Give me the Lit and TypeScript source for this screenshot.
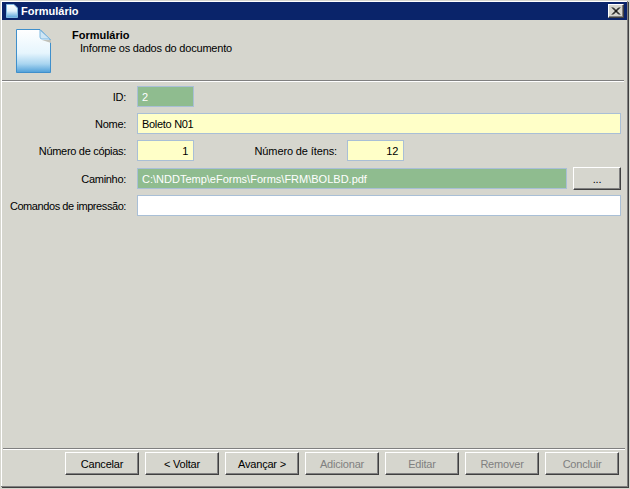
import { LitElement, html, css } from "lit";
import { customElement } from "lit/decorators.js";

@customElement("app-root")
export class AppRoot extends LitElement {
  static styles = css`
    :host { display: block; width: 630px; height: 489px; overflow: hidden; background: #d6d6ce; }
    * { box-sizing: border-box; }
    .window {
      width: 627px; height: 486px; display: flex; flex-direction: column;
      background: #d6d6ce; font: 11px "Liberation Sans", Arial, sans-serif; color: #000;
      border-top: 1px solid #d6d6ce; border-left: 1px solid #d6d6ce;
      padding: 1px 0 0 1px; box-shadow: inset 1px 1px 0 #fff, 1px 1px 0 #808080, 2px 2px 0 #404040;
    }
    .title {
      height: 18px; background: #0a246a; color: #fff; display: flex; align-items: center;
      font-weight: 700; font-size: 11px; padding: 0 3px 0 4px; gap: 3px;
      flex: none;
    }
    .title .name { flex: 1; }
    .close {
      width: 16px; height: 14px; background: #d6d6ce; display: flex; align-items: center; justify-content: center;
      border-top: 1px solid #fff; border-left: 1px solid #fff;
      border-right: 1px solid #404040; border-bottom: 1px solid #404040;
      box-shadow: inset -1px -1px 0 #808080;
    }
    .header { height: 60px; flex: none; display: flex; padding: 9px 0 0 14px; }
    .header .txt { margin-left: 21px; line-height: 13px; }
    .header b { display: block; font-size: 11px; }
    .header span { display: block; padding-left: 8px; letter-spacing: -0.2px; }
    .sep { height: 2px; flex: none; border-top: 1px solid #808080; border-bottom: 1px solid #fff; margin-right: 3px; }
    .form { flex: 1; display: flex; flex-direction: column; gap: 6px; padding: 4px 6px 0 0; }
    .row { display: grid; grid-template-columns: 124px 1fr; column-gap: 11px; align-items: center; height: 21px; flex: none; }
    .row.last { margin-top: 1px; }
    .lbl { text-align: right; white-space: nowrap; letter-spacing: -0.3px; }
    .lbl.narrow { letter-spacing: -0.42px; }
    .in {
      height: 21px; border: 1px solid #a9bfd6; display: flex; align-items: center; padding: 0 5px 0 4px; white-space: nowrap;
      overflow: hidden;
    }
    .green { background: #8fbc8f; color: #fff; }
    .yellow { background: #ffffc8; letter-spacing: -0.3px; }
    .white { background: #fff; }
    .num { justify-content: flex-end; }
    .w57 { width: 57px; flex: none; }
    .split { display: flex; align-items: center; }
    .split .lbl2 { width: 153px; padding-right: 10px; letter-spacing: -0.12px; }
    .path { display: flex; gap: 6px; align-items: center; }
    .path .in { flex: 1; }
    .btn {
      width: 74px; height: 23px; background: #d6d6ce; display: flex; align-items: center; justify-content: center;
      border-top: 1px solid #fff; border-left: 1px solid #fff;
      border-right: 1px solid #404040; border-bottom: 1px solid #404040;
      box-shadow: inset -1px -1px 0 #808080; flex: none; font: inherit; color: #000; padding: 0;
      letter-spacing: -0.2px;
    }
    .btn.dots { width: 48px; }
    .btn.off { color: #808080; }
    .foot { flex: none; }
    .foot .sep { margin: 0 2px 0 1px; }
    .bar { display: flex; justify-content: flex-end; gap: 6px; padding: 2px 8px 11px 0; }
  `;

  render() {
    return html`
      <div class="window">
        <div class="title">
          <svg width="12" height="14" viewBox="0 0 12 14">
            <defs><linearGradient id="t" x1="0" y1="0" x2="0" y2="1"><stop offset="0" stop-color="#fff"/><stop offset=".5" stop-color="#dff1fb"/><stop offset="1" stop-color="#5aa6dc"/></linearGradient></defs>
            <path d="M.5.5H8L11.5 4V13.5H.5Z" fill="url(#t)" stroke="#7fb8e0"/>
          </svg>
          <span class="name">Formulário</span>
          <div class="close">
            <svg width="10" height="8" viewBox="0 0 10 8"><path d="M1 0.5L8 7.500M2 0.500L9 7.500M8 0.500L1 7.500M9 0.500L2 7.500" fill="none" stroke="#000" stroke-width="1"/></svg>
          </div>
        </div>
        <div class="header">
          <svg width="35" height="44" viewBox="0 0 35 44">
            <defs>
              <linearGradient id="d" x1="0" y1="0" x2="0" y2="1">
                <stop offset="0" stop-color="#fff"/><stop offset=".55" stop-color="#e6f5fd"/><stop offset=".8" stop-color="#a9d5f0"/><stop offset="1" stop-color="#4f9fd8"/>
              </linearGradient>
            </defs>
            <path d="M.5.500H24L34.500 11V43.500H.5Z" fill="url(#d)" stroke="#3f8fcb"/>
            <path d="M24 1V8a2 2 0 0 0 2 2H34Z" fill="#cfe6f5" stroke="#7fb8e0"/>
            <path d="M26 11H35V14Z" fill="#c2c2ba"/>
          </svg>
          <div class="txt"><b>Formulário</b><span>Informe os dados do documento</span></div>
        </div>
        <div class="sep"></div>
        <div class="form">
          <div class="row"><div class="lbl">ID:</div><div class="in green w57">2</div></div>
          <div class="row"><div class="lbl">Nome:</div><div class="in yellow">Boleto N01</div></div>
          <div class="row"><div class="lbl">Número de cópias:</div>
            <div class="split">
              <div class="in yellow num w57">1</div>
              <div class="lbl2 lbl">Número de ítens:</div>
              <div class="in yellow num w57">12</div>
            </div>
          </div>
          <div class="row"><div class="lbl">Caminho:</div>
            <div class="path"><div class="in green">C:\\NDDTemp\\eForms\\Forms\\FRM\\BOLBD.pdf</div><button class="btn dots">...</button></div>
          </div>
          <div class="row last"><div class="lbl narrow">Comandos de impressão:</div><div class="in white"></div></div>
        </div>
        <div class="foot">
          <div class="sep"></div>
          <div class="bar">
            <button class="btn">Cancelar</button>
            <button class="btn">&lt; Voltar</button>
            <button class="btn">Avançar &gt;</button>
            <button class="btn off">Adicionar</button>
            <button class="btn off">Editar</button>
            <button class="btn off">Remover</button>
            <button class="btn off">Concluir</button>
          </div>
        </div>
      </div>
    `;
  }
}
